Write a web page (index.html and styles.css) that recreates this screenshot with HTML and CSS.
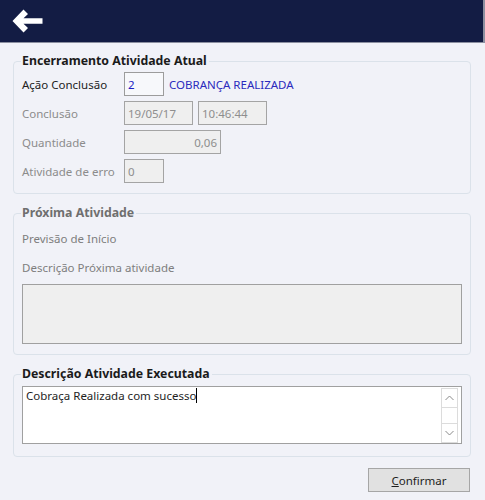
FILE: index.html
```html
<!DOCTYPE html>
<html lang="pt">
<head>
<meta charset="utf-8">
<link rel="stylesheet" href="styles.css">
</head>
<body>
<div class="header">
  <svg class="back" width="34" height="26" viewBox="0 0 34 26">
    <path d="M2.5 13 L13.5 1.5 L18 6 L13.5 10.3 H32.5 V15.7 H13.5 L18 20 L13.5 24.5 Z" fill="#ffffff"/>
  </svg>
</div>
<div class="main">
  <fieldset class="group">
    <legend class="title">Encerramento Atividade Atual</legend>
    <div class="row">
      <span class="label active">Ação Conclusão</span>
      <span class="field w40 white blue">2</span>
      <span class="desc">COBRANÇA REALIZADA</span>
    </div>
    <div class="row">
      <span class="label">Conclusão</span>
      <span class="field w69">19/05/17</span>
      <span class="field w69 ml5">10:46:44</span>
    </div>
    <div class="row">
      <span class="label">Quantidade</span>
      <span class="field w97 right">0,06</span>
    </div>
    <div class="row">
      <span class="label">Atividade de erro</span>
      <span class="field w40">0</span>
    </div>
  </fieldset>

  <fieldset class="group g2">
    <legend class="title disabled">Próxima Atividade</legend>
    <div class="line first">Previsão de Início</div>
    <div class="line">Descrição Próxima atividade</div>
    <div class="box"></div>
  </fieldset>

  <fieldset class="group g3">
    <legend class="title">Descrição Atividade Executada</legend>
    <div class="memo">
      <div class="memo-text">Cobraça Realizada com sucesso<span class="caret"></span></div>
      <div class="scroll">
        <div class="sbtn">
          <svg width="9" height="6" viewBox="0 0 9 6"><path d="M0.5 5 L4.5 1 L8.5 5" fill="none" stroke="#8a8a8a" stroke-width="1"/></svg>
        </div>
        <div class="strack"></div>
        <div class="sbtn">
          <svg width="9" height="6" viewBox="0 0 9 6"><path d="M0.5 1 L4.5 5 L8.5 1" fill="none" stroke="#8a8a8a" stroke-width="1"/></svg>
        </div>
      </div>
    </div>
  </fieldset>

  <div class="actions">
    <button class="btn"><u>C</u>onfirmar</button>
  </div>
</div>
</body>
</html>
```

FILE: styles.css
```css
html, body {
  margin: 0;
  padding: 0;
}
body {
  background: #f1f2f8;
  font-family: "Noto Sans", "DejaVu Sans", sans-serif;
  font-size: 11.5px;
  color: #8a8a8a;
  width: 485px;
  height: 500px;
  overflow: hidden;
}
.header {
  height: 42px;
  background: #131c44;
  border-bottom: 1px solid #8b8fa0;
  border-right: 2px solid #8b8fa0;
  box-sizing: content-box;
  display: flex;
  align-items: center;
  padding-left: 10px;
}
.back {
  display: block;
  margin-top: -1px;
}
.main {
  padding: 11px 14px 0 13px;
}
.group {
  margin: 0;
  border: 1px solid #dbe2ea;
  border-radius: 4px;
  padding: 0 8px 10px 8px;
  min-width: 0;
}
.title {
  padding: 0 2px 0 1px;
  margin-left: -1px;
  font-weight: bold;
  font-size: 12.3px;
  color: #1b1b1b;
  line-height: 14px;
}
.title.disabled {
  color: #6f6f6f;
}
.row {
  display: flex;
  align-items: center;
  height: 24px;
  margin-top: 5px;
}
.row:first-of-type {
  margin-top: 4px;
}
.label {
  width: 102px;
  flex: none;
  color: #8c8c8c;
}
.label.active {
  color: #222222;
}
.field {
  box-sizing: border-box;
  height: 24px;
  border: 1px solid #a4a4a4;
  background: #efefef;
  color: #8e8e8e;
  padding: 0 3px;
  display: flex;
  align-items: center;
  flex: none;
}
.field.white {
  background: #f7f8fb;
  border-color: #9c9c9c;
}
.field.blue {
  color: #1c1cc4;
}
.field.right {
  justify-content: flex-end;
}
.w40 { width: 40px; }
.w69 { width: 69px; }
.w97 { width: 97px; }
.ml5 { margin-left: 5px; }
.desc {
  margin-left: 5px;
  color: #2b2bbd;
}
.g2 {
  margin-top: 12px;
}
.line {
  height: 16px;
  line-height: 16px;
  color: #7e7e7e;
  margin-top: 13px;
}
.line.first {
  margin-top: 11px;
}
.box {
  margin-top: 8px;
  height: 60px;
  box-sizing: border-box;
  border: 1px solid #a0a0a0;
  background: #efefef;
}
.g3 {
  margin-top: 12px;
  padding-bottom: 12px;
}
.memo {
  margin-top: 5px;
  height: 58px;
  box-sizing: border-box;
  border: 1px solid #a0a0a0;
  background: #ffffff;
  display: flex;
}
.memo-text {
  flex: 1;
  color: #1e1e1e;
  padding: 1px 3px;
  line-height: 16px;
}
.caret {
  display: inline-block;
  width: 1px;
  height: 15px;
  background: #000;
  vertical-align: -3px;
}
.scroll {
  width: 17px;
  margin: 1px 3px 0 0;
  height: 55px;
  display: flex;
  flex-direction: column;
  border: 1px solid #dcdcdc;
  box-sizing: border-box;
}
.sbtn {
  height: 18px;
  display: flex;
  align-items: center;
  justify-content: center;
  background: #ffffff;
}
.strack {
  flex: 1;
  border-top: 1px solid #dcdcdc;
  border-bottom: 1px solid #dcdcdc;
  background: #ffffff;
}
.actions {
  display: flex;
  justify-content: flex-end;
  margin-top: 11px;
  padding-right: 1px;
}
.btn {
  width: 102px;
  height: 24px;
  box-sizing: border-box;
  background: #e1e1e1;
  border: 1px solid #a6a6a6;
  font-family: inherit;
  font-size: 11.5px;
  color: #1e1e1e;
  padding: 0;
}
```
